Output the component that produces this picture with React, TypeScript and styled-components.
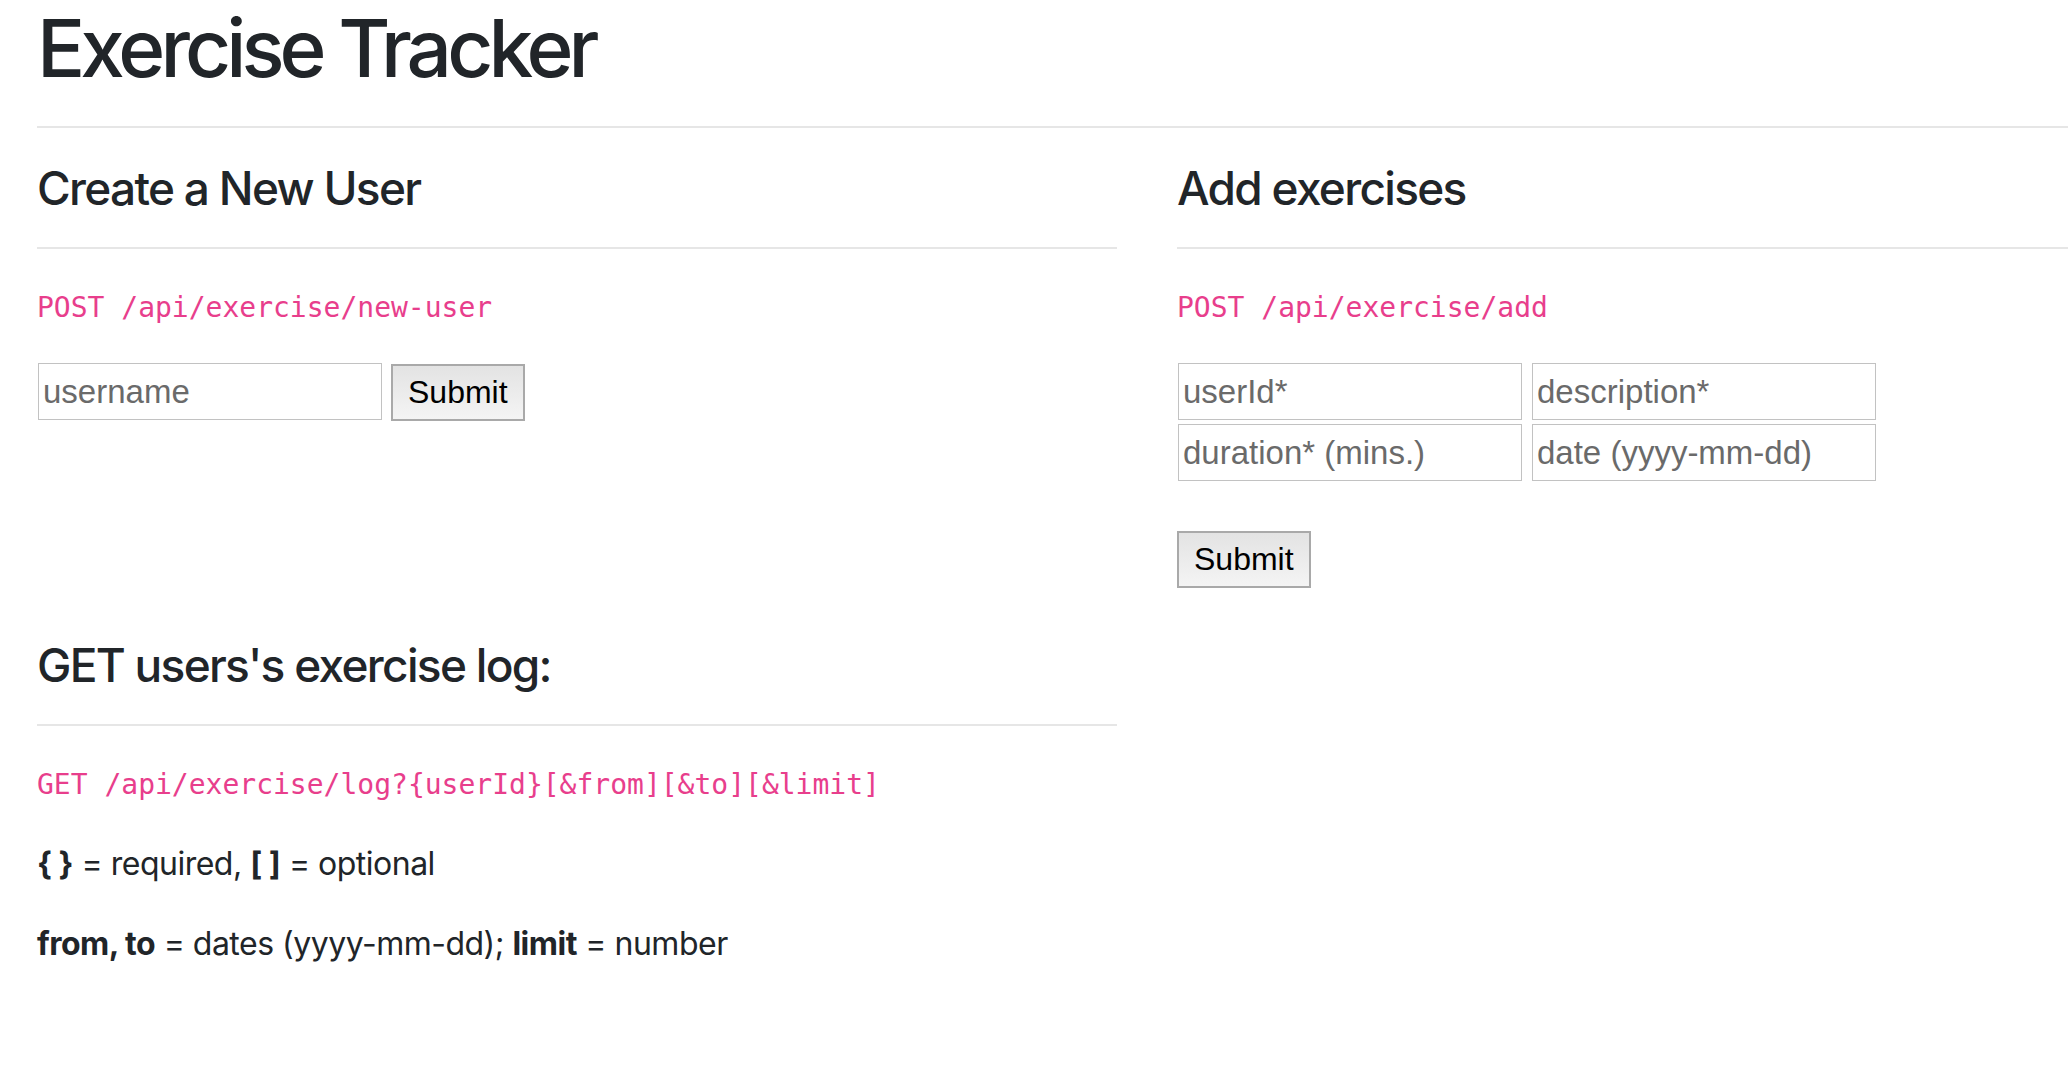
import React from "react";
import styled, { createGlobalStyle } from "styled-components";

const GlobalStyle = createGlobalStyle`
  html, body {
    margin: 0;
    padding: 0;
    background: #ffffff;
    overflow: hidden;
  }
  body {
    font-family: "Inter", "Helvetica Neue", Arial, sans-serif;
    color: #212529;
  }
`;

const Page = styled.main`
  width: 2220px;
  padding-left: 37px;
`;

const Title = styled.h1`
  margin: 0;
  font-size: 80px;
  line-height: 96px;
  font-weight: 500;
  letter-spacing: -4.9px;
`;

const Rule = styled.hr<{ $after?: number }>`
  margin: 30px 0 ${(p) => p.$after ?? 31}px;
  height: 0;
  border: 0;
  border-top: 2px solid #e6e6e6;
`;

const Columns = styled.div`
  display: grid;
  grid-template-columns: 1080px 1080px;
  column-gap: 60px;
  align-items: start;
`;

const Column = styled.section``;

const Heading = styled.h4`
  margin: 0;
  font-size: 46px;
  line-height: 55px;
  font-weight: 500;
  letter-spacing: -1.7px;
`;

const HeadingRule = styled.hr`
  margin: 31px 0 35px;
  height: 0;
  border: 0;
  border-top: 2px solid #e6e6e6;
`;

const Endpoint = styled.p<{ $after?: number }>`
  margin: 0 0 ${(p) => p.$after ?? 31}px;
  font-family: "DejaVu Sans Mono", "Liberation Mono", monospace;
  font-size: 28px;
  line-height: 48px;
  color: #e83e8c;
  white-space: pre;
`;

const InlineForm = styled.form`
  display: flex;
  align-items: flex-start;
  gap: 9px;
  margin-left: 1px;
`;

const FieldGrid = styled.div`
  display: grid;
  grid-template-columns: 344px 344px;
  column-gap: 10px;
  row-gap: 4px;
  margin-left: 1px;
`;

const StackForm = styled.form`
  display: flex;
  flex-direction: column;
  align-items: flex-start;
  gap: 49px;
`;

const Field = styled.input`
  box-sizing: border-box;
  width: 344px;
  height: 57px;
  margin: 0;
  padding: 0 4px;
  border: 1px solid #c2c2c2;
  border-radius: 0;
  background: #ffffff;
  font-family: "Liberation Sans", Arial, sans-serif;
  font-size: 33px;
  color: #222;
  outline: none;

  &::placeholder {
    color: #6a6a6a;
  }
`;

const SubmitButton = styled.button`
  box-sizing: border-box;
  height: 57px;
  margin: 1px 0 0;
  padding: 0 15px;
  border: 2px solid #a9a9a9;
  border-radius: 0;
  background: linear-gradient(180deg, #e3e3e3 0%, #f4f4f4 100%);
  font-family: "Liberation Sans", Arial, sans-serif;
  font-size: 32px;
  color: #000;
`;

const LogSection = styled.section`
  width: 1080px;
  margin-top: 50px;
`;

const Note = styled.p<{ $after?: number }>`
  margin: 0 0 ${(p) => p.$after ?? 32}px;
  font-size: 32px;
  line-height: 48px;
  letter-spacing: -0.5px;

  b {
    font-weight: 700;
  }
`;

export default function App() {
  return (
    <Page>
      <GlobalStyle />
      <Title>Exercise Tracker</Title>
      <Rule $after={33} />

      <Columns>
        <Column>
          <Heading>Create a New User</Heading>
          <HeadingRule />
          <Endpoint>POST /api/exercise/new-user</Endpoint>
          <InlineForm onSubmit={(e) => e.preventDefault()}>
            <Field type="text" placeholder="username" />
            <SubmitButton type="submit">Submit</SubmitButton>
          </InlineForm>
        </Column>

        <Column>
          <Heading>Add exercises</Heading>
          <HeadingRule />
          <Endpoint>POST /api/exercise/add</Endpoint>
          <StackForm onSubmit={(e) => e.preventDefault()}>
            <FieldGrid>
              <Field type="text" placeholder="userId*" />
              <Field type="text" placeholder="description*" />
              <Field type="text" placeholder="duration* (mins.)" />
              <Field type="text" placeholder="date (yyyy-mm-dd)" />
            </FieldGrid>
            <SubmitButton type="submit">Submit</SubmitButton>
          </StackForm>
        </Column>
      </Columns>

      <LogSection>
        <Heading>GET users's exercise log:</Heading>
        <HeadingRule />
        <Endpoint $after={31}>GET /api/exercise/log?{"{userId}[&from][&to][&limit]"}</Endpoint>
        <Note>
          <b>{"{ }"}</b> = required, <b>[ ]</b> = optional
        </Note>
        <Note>
          <b>from, to</b> = dates (yyyy-mm-dd); <b>limit</b> = number
        </Note>
      </LogSection>
    </Page>
  );
}
